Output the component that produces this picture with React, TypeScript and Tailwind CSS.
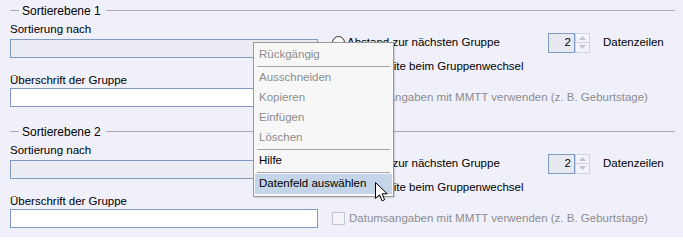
import React from "react";

const font = { fontFamily: '"Liberation Sans", Arial, sans-serif' };

function Radio() {
    return (
        <span className="ml-px mr-[1px] inline-block h-[13px] w-[13px] shrink-0 rounded-full border border-[#333] bg-[#f7f7fb]" />
    );
}

function Spinner() {
    return (
        <div className="flex h-[20px]">
            <div className="flex h-[20px] w-[27px] items-center justify-end border border-[#7f9ac4] bg-[#e8e8f0] pr-[3px] text-black">
                2
            </div>
            <div className="flex w-[15px] flex-col">
                <div className="flex h-[10px] items-center justify-center border border-[#d3d3dd] bg-[#f3f3f9]">
                    <svg width="7" height="4" viewBox="0 0 7 4">
                        <path d="M0 4 L3.5 0 L7 4 Z" fill="#c4c4cc" />
                    </svg>
                </div>
                <div className="flex h-[10px] items-center justify-center border border-t-0 border-[#d3d3dd] bg-[#f3f3f9]">
                    <svg width="7" height="4" viewBox="0 0 7 4">
                        <path d="M0 0 L3.5 4 L7 0 Z" fill="#c4c4cc" />
                    </svg>
                </div>
            </div>
        </div>
    );
}

function Section({ n }: { n: number }) {
    return (
        <div className="h-[121px]">
            {/* Group box header */}
            <div className="flex h-[21px] items-center pl-[10px] pr-[8px]">
                <div className="h-px w-[9px] bg-[#a8a8b6]" />
                <span className="ml-[3px] mr-[5px] text-[12px] leading-none text-black">Sortierebene {n}</span>
                <div className="h-px flex-1 bg-[#a8a8b6]" />
            </div>

            <div className="flex pl-[10px]">
                {/* Left column */}
                <div className="w-[308px]">
                    <div className="h-[16px] leading-[16px] text-black">Sortierung nach</div>
                    <div className="mt-[2px] h-[19px] border border-[#7f9ac4] bg-[#ececf4]" />
                    <div className="mt-[14px] h-[16px] leading-[16px] text-black">Überschrift der Gruppe</div>
                    <div className="h-[19px] border border-[#7f9ac4] bg-white" />
                </div>

                {/* Right column */}
                <div className="ml-[13px] pt-[12px]">
                    <div className="flex h-[19px] items-center">
                        <div className="flex w-[217px] items-center">
                            <Radio />
                            <span className="ml-[1px] text-black">Abstand zur nächsten Gruppe</span>
                        </div>
                        <Spinner />
                        <span className="ml-[13px] text-black">Datenzeilen</span>
                    </div>
                    <div className="mt-[5px] flex h-[19px] items-center">
                        <Radio />
                        <span className="ml-[3px] text-black">Neue Seite beim Gruppenwechsel</span>
                    </div>
                    <div className="mt-[12px] flex h-[19px] items-center">
                        <span className="ml-px inline-block h-[13px] w-[13px] border border-[#c6c6ce] bg-[#f4f4f8]" />
                        <span className="ml-[4px] text-[#8d8d8d]">
                            Datumsangaben mit MMTT verwenden (z. B. Geburtstage)
                        </span>
                    </div>
                </div>
            </div>
        </div>
    );
}

function MenuItem({ label, disabled, active }: { label: string; disabled?: boolean; active?: boolean }) {
    return (
        <div
            className={`flex h-[20px] items-center px-[4px] ${active ? "bg-[#c4d5ea]" : ""} ${
                disabled ? "text-[#8d8d8d]" : "text-black"
            }`}
        >
            {label}
        </div>
    );
}

function Separator() {
    return (
        <div className="flex h-[3px] items-center px-[2px]">
            <div className="h-px w-full bg-[#a5a5a5]" />
        </div>
    );
}

export default function App() {
    return (
        <div
            className="relative h-[237px] w-[683px] overflow-hidden bg-[#f0f0fa] text-[11.5px]"
            style={font}
        >
            <Section n={1} />
            <Section n={2} />

            {/* Context menu */}
            <div className="absolute left-[253px] top-[42px] w-[141px] border border-[#9a9a9a] bg-[#f7f7f7] p-px py-[2px] shadow-[1px_1px_1px_rgba(0,0,0,0.12)]">
                <MenuItem label="Rückgängig" disabled />
                <Separator />
                <MenuItem label="Ausschneiden" disabled />
                <MenuItem label="Kopieren" disabled />
                <MenuItem label="Einfügen" disabled />
                <MenuItem label="Löschen" disabled />
                <Separator />
                <MenuItem label="Hilfe" />
                <Separator />
                <MenuItem label="Datenfeld auswählen" active />
            </div>

            {/* Mouse cursor */}
            <svg className="absolute left-[375px] top-[182px]" width="13" height="21" viewBox="0 0 13 21">
                <path
                    d="M0.5 0.5 L0.5 16.5 L4.5 12.8 L7 18.8 L9.6 17.7 L7.2 11.8 L12.2 11.8 Z"
                    fill="#fff"
                    stroke="#000"
                    strokeWidth="1"
                    strokeLinejoin="miter"
                />
            </svg>
        </div>
    );
}
